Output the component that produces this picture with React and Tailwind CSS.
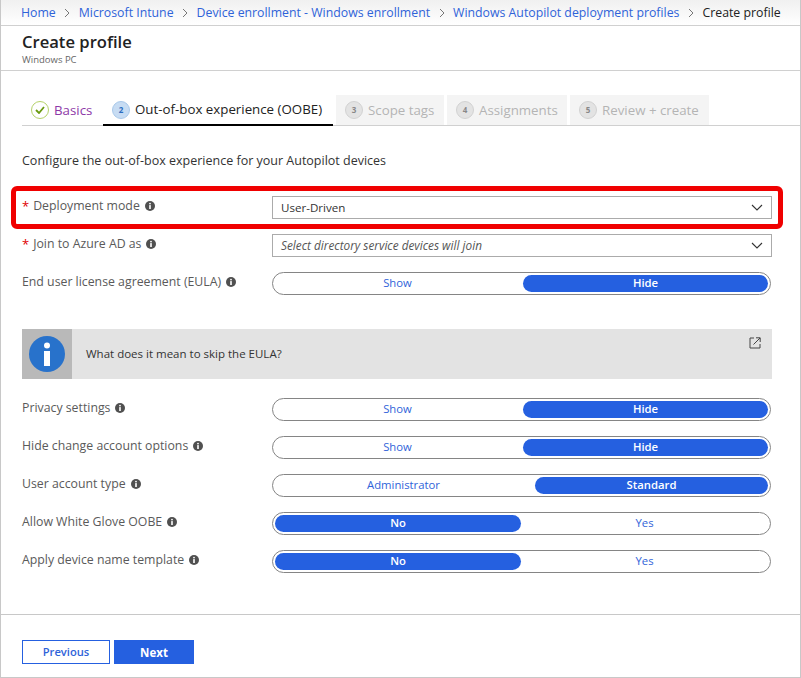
import React from "react";

const font = { fontFamily: '"Open Sans", "Noto Sans", sans-serif' };

function Info({ className = "" }) {
  return (
    <svg width="10" height="10" viewBox="0 0 10 10" className={"shrink-0 " + className}>
      <circle cx="5" cy="5" r="5" fill="#505050" />
      <circle cx="5" cy="2.6" r="0.9" fill="#fff" />
      <rect x="4.2" y="4.1" width="1.6" height="3.9" fill="#fff" />
    </svg>
  );
}

function Chevron() {
  return (
    <svg width="12" height="7" viewBox="0 0 12 7" fill="none" stroke="#333" strokeWidth="1.1">
      <path d="M1 1l5 5 5-5" />
    </svg>
  );
}

function Crumb({ children }) {
  return <a className="text-[#2f63d9] whitespace-nowrap">{children}</a>;
}

function Sep() {
  return (
    <svg width="6" height="10" viewBox="0 0 6 10" fill="none" stroke="#777" strokeWidth="1" className="mx-[8.5px] shrink-0">
      <path d="M1 1l4 4-4 4" />
    </svg>
  );
}

function Step({ n, active }) {
  return (
    <span
      className={
        "w-[18px] h-[18px] rounded-full flex items-center justify-center text-[8px] font-bold border shrink-0 " +
        (active
          ? "bg-[#c7dcf3] border-[#a9c9ea] text-[#2b6cc0]"
          : "bg-[#e3e3e3] border-[#d2d2d2] text-[#888]")
      }
    >
      {n}
    </span>
  );
}

function DisabledTab({ n, label, w }) {
  return (
    <div className={"h-[30px] flex items-center gap-[5px] pl-[9px] bg-[#f4f4f4] text-[#b4b4b4] text-[13.3px] " + w}>
      <Step n={n} />
      <span className="whitespace-nowrap pt-[1px]">{label}</span>
    </div>
  );
}

function Label({ req, text }) {
  return (
    <div className="w-[250px] shrink-0 flex items-center pb-[3px] text-[12.3px] text-[#5a5a5a] whitespace-nowrap">
      {req && <span className="text-[#e00000] mr-[4px] text-[13px] leading-none">*</span>}
      <span>{text}</span>
      <Info className="ml-[5px]" />
    </div>
  );
}

function Select({ value, italic }) {
  return (
    <div className="w-[500px] h-[23px] border border-[#ababab] bg-white flex items-center justify-between pl-[8px] pr-[8px] text-[11.6px] text-[#333]">
      <span className={italic ? "italic text-[#555] text-[11.8px]" : ""}>{value}</span>
      <Chevron />
    </div>
  );
}

function Toggle({ left, right, active, split = 248 }) {
  const on = "bg-[#2560e0] text-white font-semibold rounded-[9px]";
  const off = "text-[#2f63d9]";
  return (
    <div className="w-[499px] h-[23px] rounded-[12px] border border-[#858585] px-[2px] flex items-center text-[11.3px] bg-white">
      <div
        style={{ width: split }}
        className={"h-[17px] flex items-center justify-center shrink-0 " + (active === 0 ? on : off + " pr-[3px]")}
      >
        {left}
      </div>
      <div className={"h-[17px] flex-1 flex items-center justify-center " + (active === 1 ? on : off)}>{right}</div>
    </div>
  );
}

function Row({ className = "", label, children }) {
  return (
    <div className={"flex items-center " + className}>
      {label}
      {children}
    </div>
  );
}

export default function App() {
  return (
    <div style={font} className="relative w-[801px] h-[678px] bg-white border-x border-b border-[#c8c8c8] flex flex-col overflow-hidden">
      <div className="h-[26px] shrink-0 border-b border-[#d0d0d0] bg-gradient-to-b from-[#f0f0f0] to-white flex items-center pl-[20px] pt-[1px] text-[12.3px]">
        <Crumb>Home</Crumb>
        <Sep />
        <Crumb>Microsoft Intune</Crumb>
        <Sep />
        <Crumb>Device enrollment - Windows enrollment</Crumb>
        <Sep />
        <Crumb>Windows Autopilot deployment profiles</Crumb>
        <Sep />
        <span className="text-[#222] whitespace-nowrap">Create profile</span>
      </div>

      <div className="h-[45px] shrink-0 border-b border-[#d0d0d0] pl-[21px] pt-[6px]">
        <div className="text-[16.6px] leading-[20px] text-[#222] font-semibold">Create profile</div>
        <div className="text-[9.5px] leading-[12px] text-[#666] mt-[2px]">Windows PC</div>
      </div>

      <div className="ml-[21px] mt-[24px] h-[31px] shrink-0 border-b border-[#d0d0d0] flex items-start">
        <div className="h-[30px] flex items-center gap-[5px] pl-[9px] w-[81px] text-[13.3px] text-[#8e3aa8]">
          <span className="w-[18px] h-[18px] rounded-full border border-[#b5d26a] flex items-center justify-center shrink-0">
            <svg width="10" height="8" viewBox="0 0 10 8" fill="none" stroke="#6a9a10" strokeWidth="1.8">
              <path d="M1 4l3 3 5-6" />
            </svg>
          </span>
          <span className="pt-[1px]">Basics</span>
        </div>
        <div className="h-[31px] w-[230px] border-b-2 border-black flex items-center gap-[5px] pl-[9px] text-[13.3px] text-[#222] whitespace-nowrap">
          <Step n="2" active />
          <span className="pt-[1px]">Out-of-box experience (OOBE)</span>
        </div>
        <div className="w-[3px]" />
        <DisabledTab n="3" label="Scope tags" w="w-[108px]" />
        <div className="w-[3px]" />
        <DisabledTab n="4" label="Assignments" w="w-[120px]" />
        <div className="w-[3px]" />
        <DisabledTab n="5" label="Review + create" w="w-[139px]" />
      </div>

      <div className="pl-[21px] mt-[26px] text-[12.5px] leading-[18px] text-[#333] whitespace-nowrap">
        Configure the out-of-box experience for your Autopilot devices
      </div>

      <div className="pl-[21px] flex flex-col">
        <Row className="mt-[26px] h-[23px]" label={<Label req text="Deployment mode" />}>
          <Select value="User-Driven" />
        </Row>
        <Row className="mt-[15px] h-[23px]" label={<Label req text="Join to Azure AD as" />}>
          <Select value="Select directory service devices will join" italic />
        </Row>
        <Row className="mt-[15px] h-[23px]" label={<Label text="End user license agreement (EULA)" />}>
          <Toggle left="Show" right="Hide" active={1} />
        </Row>

        <div className="mt-[34px] w-[750px] h-[50px] bg-[#e3e3e3] flex">
          <div className="w-[50px] bg-[#b9b9b9] flex items-center justify-center shrink-0">
            <svg width="36" height="36" viewBox="0 0 36 36">
              <circle cx="18" cy="18" r="18" fill="#2872cb" />
              <circle cx="18" cy="9.5" r="3" fill="#fff" />
              <rect x="15" y="15" width="6" height="15" fill="#fff" />
            </svg>
          </div>
          <div className="flex-1 flex items-center pl-[14px] text-[11.5px] text-[#333] relative">
            What does it mean to skip the EULA?
            <svg width="12" height="12" viewBox="0 0 12 12" fill="none" stroke="#444" strokeWidth="1" className="absolute right-[11px] top-[8px]">
              <path d="M5 1H1v10h10V7" />
              <path d="M7 .8h4.2V5M11 1L4.5 7.5" />
            </svg>
          </div>
        </div>

        <Row className="mt-[19px] h-[23px]" label={<Label text="Privacy settings" />}>
          <Toggle left="Show" right="Hide" active={1} />
        </Row>
        <Row className="mt-[15px] h-[23px]" label={<Label text="Hide change account options" />}>
          <Toggle left="Show" right="Hide" active={1} />
        </Row>
        <Row className="mt-[15px] h-[23px]" label={<Label text="User account type" />}>
          <Toggle left="Administrator" right="Standard" active={1} split={260} />
        </Row>
        <Row className="mt-[15px] h-[23px]" label={<Label text="Allow White Glove OOBE" />}>
          <Toggle left="No" right="Yes" active={0} split={246} />
        </Row>
        <Row className="mt-[15px] h-[23px]" label={<Label text="Apply device name template" />}>
          <Toggle left="No" right="Yes" active={0} split={246} />
        </Row>
      </div>

      <div className="mt-[41px] border-t border-[#c8c8c8] pl-[21px] pt-[25px] flex gap-[4px]">
        <div className="w-[88px] h-[24px] pt-[1px] border border-[#2560e0] text-[#2f63d9] text-[11.2px] font-semibold flex items-center justify-center">Previous</div>
        <div className="w-[80px] h-[24px] pt-[1px] bg-[#2560e0] text-white text-[11.5px] font-bold flex items-center justify-center">Next</div>
      </div>

      <div className="absolute left-[10px] top-[186px] w-[772px] h-[43px] border-[5px] border-[#f00000] rounded-[6px] pointer-events-none" />
    </div>
  );
}
